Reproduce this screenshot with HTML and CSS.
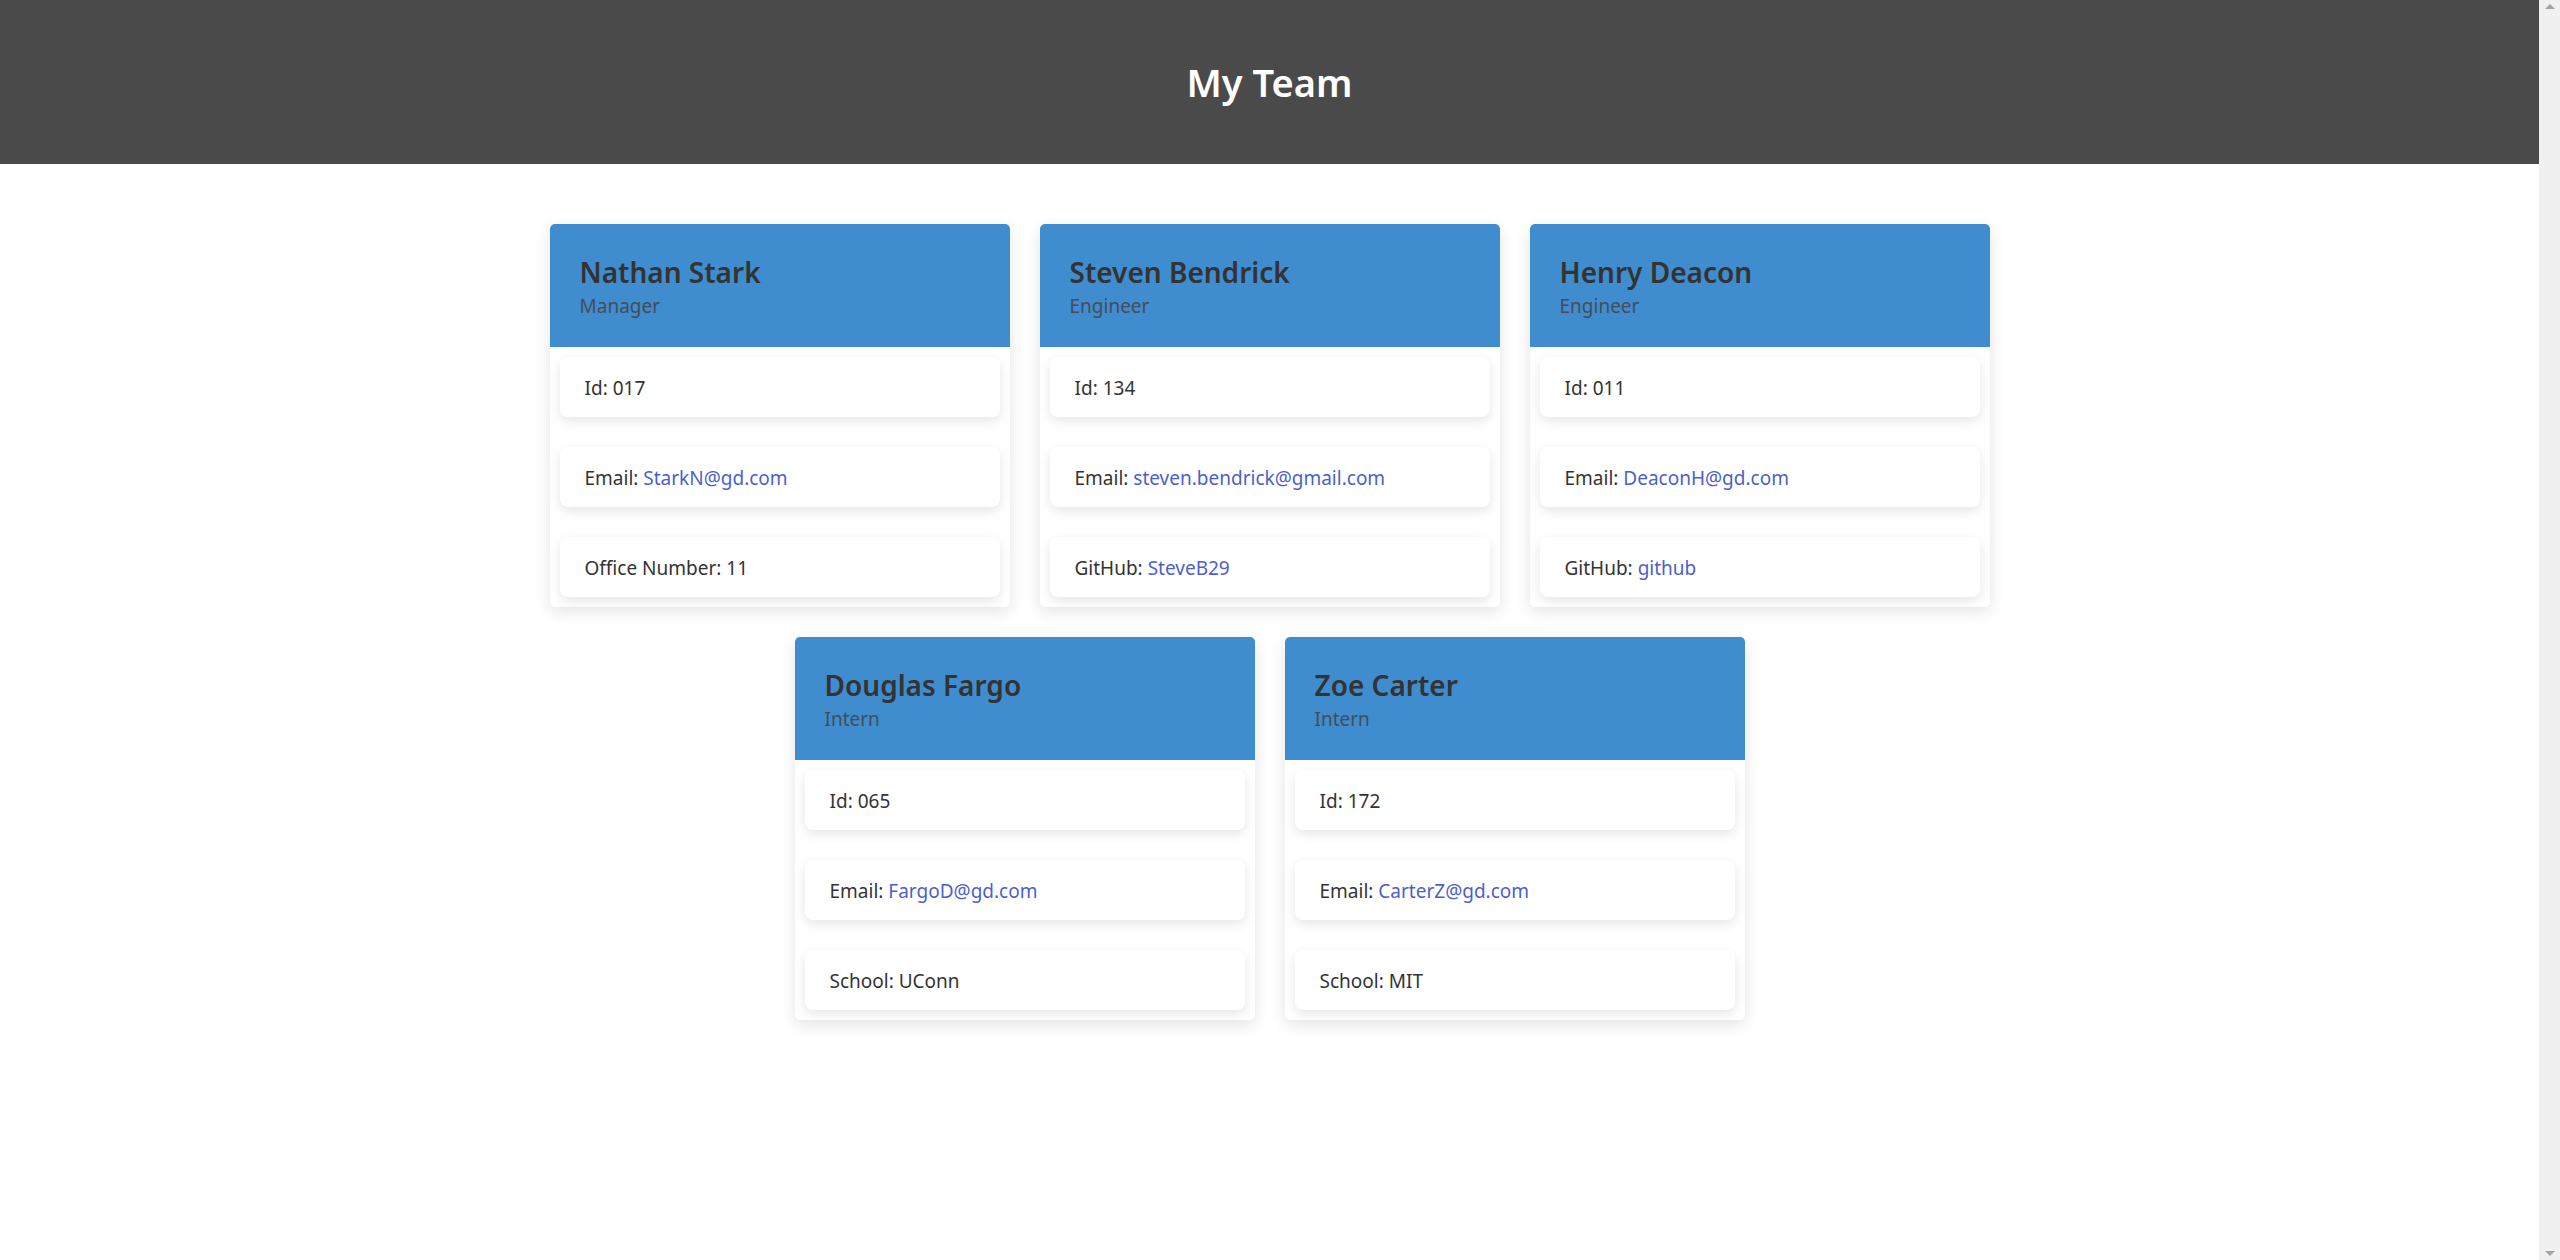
FILE: index.html
```html
<!DOCTYPE html>
<html lang="en">
<head>
<meta charset="utf-8">
<title>My Team</title>
<link rel="stylesheet" href="styles.css">
</head>
<body>
<div class="page">
  <header class="topbar">
    <h1 class="title">My Team</h1>
  </header>
  <main class="team">
    <div class="card">
      <div class="card-head">
        <h2 class="name">Nathan Stark</h2>
        <div class="role">Manager</div>
      </div>
      <ul class="info">
        <li class="item">Id: 017</li>
        <li class="item">Email:&nbsp;<a href="#">StarkN@gd.com</a></li>
        <li class="item">Office Number: 11</li>
      </ul>
    </div>
    <div class="card">
      <div class="card-head">
        <h2 class="name">Steven Bendrick</h2>
        <div class="role">Engineer</div>
      </div>
      <ul class="info">
        <li class="item">Id: 134</li>
        <li class="item">Email:&nbsp;<a href="#">steven.bendrick@gmail.com</a></li>
        <li class="item">GitHub:&nbsp;<a href="#">SteveB29</a></li>
      </ul>
    </div>
    <div class="card">
      <div class="card-head">
        <h2 class="name">Henry Deacon</h2>
        <div class="role">Engineer</div>
      </div>
      <ul class="info">
        <li class="item">Id: 011</li>
        <li class="item">Email:&nbsp;<a href="#">DeaconH@gd.com</a></li>
        <li class="item">GitHub:&nbsp;<a href="#">github</a></li>
      </ul>
    </div>
    <div class="card">
      <div class="card-head">
        <h2 class="name">Douglas Fargo</h2>
        <div class="role">Intern</div>
      </div>
      <ul class="info">
        <li class="item">Id: 065</li>
        <li class="item">Email:&nbsp;<a href="#">FargoD@gd.com</a></li>
        <li class="item">School: UConn</li>
      </ul>
    </div>
    <div class="card">
      <div class="card-head">
        <h2 class="name">Zoe Carter</h2>
        <div class="role">Intern</div>
      </div>
      <ul class="info">
        <li class="item">Id: 172</li>
        <li class="item">Email:&nbsp;<a href="#">CarterZ@gd.com</a></li>
        <li class="item">School: MIT</li>
      </ul>
    </div>
  </main>
</div>
<div class="scrollbar" aria-hidden="true">
  <span class="arrow-up"></span>
  <span class="arrow-down"></span>
</div>
</body>
</html>
```

FILE: styles.css
```css
html, body {
  height: 100%;
}
body {
  margin: 0;
  display: flex;
  font-family: "Noto Sans", "Open Sans", sans-serif;
  color: #333333;
  background: #ffffff;
  overflow: hidden;
}
.page {
  flex: 1;
  min-width: 0;
}
.scrollbar {
  width: 21px;
  flex: none;
  height: 100vh;
  background: #f0f0f0;
  display: flex;
  flex-direction: column;
  justify-content: space-between;
  align-items: center;
  padding: 4px 0;
  box-sizing: border-box;
}
.arrow-up,
.arrow-down {
  width: 0;
  height: 0;
  border-left: 5px solid transparent;
  border-right: 5px solid transparent;
}
.arrow-up {
  border-bottom: 5px solid #a3a3a3;
}
.arrow-down {
  border-top: 5px solid #a3a3a3;
}
.topbar {
  height: 164px;
  background: #4a4a4a;
  display: flex;
  align-items: center;
  justify-content: center;
}
.title {
  margin: 0;
  color: #ffffff;
  font-size: 38px;
  font-weight: 600;
}
.team {
  display: flex;
  flex-wrap: wrap;
  justify-content: center;
  gap: 30px;
  max-width: 1500px;
  margin: 60px auto 0;
  padding-bottom: 40px;
}
.card {
  width: 460px;
  border-radius: 5px;
  background: #ffffff;
  box-shadow: 0 5px 16px rgba(0, 0, 0, 0.11);
  overflow: hidden;
}
.card-head {
  height: 123px;
  box-sizing: border-box;
  background: #3f8ccf;
  padding: 29px 30px 0;
}
.name {
  margin: 0;
  font-size: 28px;
  font-weight: 600;
  line-height: 39px;
  color: #333333;
}
.role {
  font-size: 19px;
  line-height: 28px;
  color: #454d58;
}
.info {
  list-style: none;
  margin: 0;
  padding: 10px;
  display: flex;
  flex-direction: column;
  gap: 30px;
}
.item {
  height: 60px;
  box-sizing: border-box;
  display: flex;
  align-items: center;
  padding: 2px 25px 0;
  border-radius: 8px;
  background: #ffffff;
  box-shadow: 0 4px 12px rgba(0, 0, 0, 0.1);
  font-size: 19px;
  color: #333333;
}
.item a {
  color: #4b5fcf;
  text-decoration: none;
}
```
